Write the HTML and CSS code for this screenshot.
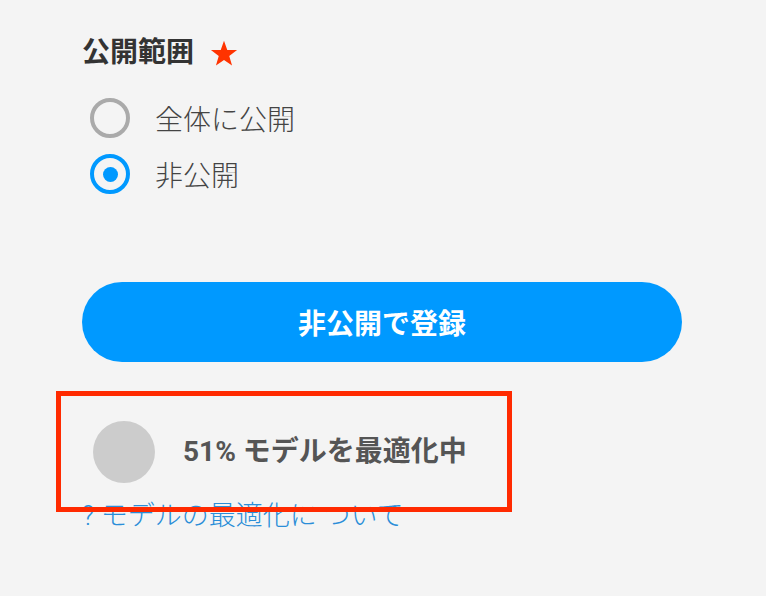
FILE: index.html
```html
<!DOCTYPE html>
<html lang="ja">
<head>
<meta charset="utf-8">
<link rel="stylesheet" href="styles.css">
</head>
<body>
<div class="page">
  <div class="field-title">
    <span>公開範囲</span>
    <svg class="star" width="28" height="27" viewBox="0 0 24 23"><polygon points="12,0.5 14.8,8.4 23.2,8.6 16.5,13.7 18.9,21.8 12,17 5.1,21.8 7.5,13.7 0.8,8.6 9.2,8.4" fill="#ff3300"/></svg>
  </div>
  <div class="radios">
    <label class="radio-row"><span class="radio"></span><span class="radio-label">全体に公開</span></label>
    <label class="radio-row"><span class="radio checked"></span><span class="radio-label">非公開</span></label>
  </div>
  <button class="submit">非公開で登録</button>
  <div class="status">
    <span class="spinner"></span>
    <span class="status-text">51% モデルを最適化中</span>
  </div>
  <a class="help" href="#">? モデルの最適化に ついて</a>
</div>
<div class="highlight"></div>
</body>
</html>
```

FILE: styles.css
```css
html, body {
  margin: 0;
  padding: 0;
  background: #f4f4f4;
}
body {
  font-family: Roboto, "Noto Sans CJK JP", sans-serif;
  width: 766px;
  height: 596px;
  overflow: hidden;
  position: relative;
}
.page {
  padding: 39px 0 0 82px;
  display: flex;
  flex-direction: column;
  align-items: flex-start;
}
.field-title {
  display: flex;
  align-items: center;
  gap: 16px;
  height: 28px;
  font-size: 28px;
  font-weight: 700;
  color: #333;
  line-height: 28px;
}
.star {
  display: block;
}
.radios {
  margin-top: 23px;
  display: flex;
  flex-direction: column;
}
.radio-row {
  display: flex;
  align-items: center;
  height: 56px;
  padding-left: 8px;
  gap: 25px;
}
.radio {
  width: 40px;
  height: 40px;
  box-sizing: border-box;
  border: 4px solid #aaaaaa;
  border-radius: 50%;
  display: flex;
  align-items: center;
  justify-content: center;
}
.radio.checked {
  border-color: #0099ff;
}
.radio.checked::after {
  content: "";
  width: 15px;
  height: 15px;
  border-radius: 50%;
  background: #0099ff;
}
.radio-label {
  font-family: "Noto Sans CJK JP", sans-serif;
  font-size: 28px;
  font-weight: 300;
  color: #444;
  line-height: 30px;
}
.submit {
  margin-top: 80px;
  width: 600px;
  height: 80px;
  border: none;
  border-radius: 40px;
  background: #0099ff;
  color: #fff;
  font-family: "Noto Sans CJK JP", sans-serif;
  font-size: 28px;
  font-weight: 700;
  padding: 0;
}
.status {
  margin-top: 59px;
  margin-left: 11px;
  display: flex;
  align-items: center;
  gap: 28px;
}
.spinner {
  width: 62px;
  height: 62px;
  border-radius: 50%;
  background: #cccccc;
}
.status-text {
  font-size: 28px;
  font-weight: 700;
  color: #555;
  line-height: 30px;
}
.help {
  margin-top: 18px;
  font-size: 27px;
  line-height: 30px;
  color: #2a8ed8;
  text-decoration: none;
  font-weight: 300;
}
.highlight {
  position: absolute;
  left: 56px;
  top: 391px;
  width: 456px;
  height: 121px;
  box-sizing: border-box;
  border: 5px solid #ff2a00;
}
```
